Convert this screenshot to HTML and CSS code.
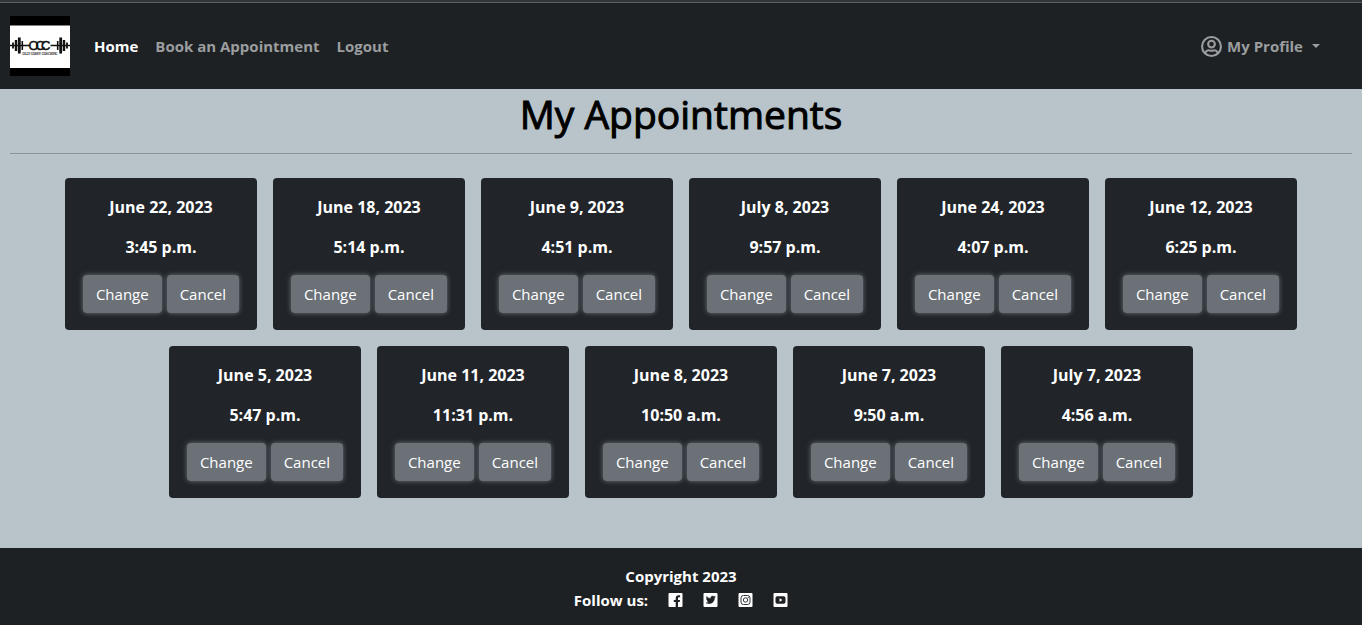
FILE: index.html
```html
<!DOCTYPE html>
<html lang="en">
<head>
<meta charset="utf-8">
<meta name="viewport" content="width=device-width, initial-scale=1">
<title>My Appointments</title>
<link rel="stylesheet" href="styles.css">
</head>
<body>
<header class="navbar">
  <a class="brand" href="#" aria-label="Olly Corey Coaching">
    <svg class="logo" viewBox="0 0 60 60" aria-hidden="true">
      <rect width="60" height="60" fill="#000"/>
      <rect y="9.500" width="60" height="42.500" fill="#fff"/>
      <path d="M0 29.500H20M40.500 29.500H60" stroke="#111" stroke-width="1.300"/>
      <path d="M3 26.500v6M57 26.500v6" stroke="#111" stroke-width="1.800"/>
      <path d="M6 24v11M54 24v11" stroke="#111" stroke-width="2.400"/>
      <path d="M9.300 21.500v16M50.700 21.500v16" stroke="#111" stroke-width="2.800"/>
      <path d="M12.300 25v9M47.700 25v9" stroke="#111" stroke-width="1.600"/>
      <text class="logo-mark" x="18.500 25.500 31" y="34">OCC</text>
      <text class="logo-name" x="30" y="39" text-anchor="middle">OLLY COREY COACHING</text>
    </svg>
  </a>
  <nav class="nav-links">
    <a class="nav-link active" href="#">Home</a>
    <a class="nav-link" href="#">Book an Appointment</a>
    <a class="nav-link" href="#">Logout</a>
  </nav>
  <button class="profile" type="button">
    <svg class="profile-icon" viewBox="0 0 20 20" aria-hidden="true" fill="none" stroke="currentColor" stroke-width="2">
      <circle cx="10" cy="10" r="9"/>
      <circle cx="10" cy="7.700" r="3.200"/>
      <path d="M3.800 16.200C5 14 6.600 13.300 8 13.700c1.400.4 2.600.4 4 0 1.400-.4 3 .3 4.200 2.500"/>
    </svg>
    <span>My Profile</span>
    <span class="caret"></span>
  </button>
</header>

<main class="content">
  <h1 class="title">My Appointments</h1>
  <hr class="rule">
  <div class="cards">
    <article class="card"><p>June 22, 2023</p><p>3:45 p.m.</p><div class="actions"><button class="btn" type="button">Change</button><button class="btn" type="button">Cancel</button></div></article>
    <article class="card"><p>June 18, 2023</p><p>5:14 p.m.</p><div class="actions"><button class="btn" type="button">Change</button><button class="btn" type="button">Cancel</button></div></article>
    <article class="card"><p>June 9, 2023</p><p>4:51 p.m.</p><div class="actions"><button class="btn" type="button">Change</button><button class="btn" type="button">Cancel</button></div></article>
    <article class="card"><p>July 8, 2023</p><p>9:57 p.m.</p><div class="actions"><button class="btn" type="button">Change</button><button class="btn" type="button">Cancel</button></div></article>
    <article class="card"><p>June 24, 2023</p><p>4:07 p.m.</p><div class="actions"><button class="btn" type="button">Change</button><button class="btn" type="button">Cancel</button></div></article>
    <article class="card"><p>June 12, 2023</p><p>6:25 p.m.</p><div class="actions"><button class="btn" type="button">Change</button><button class="btn" type="button">Cancel</button></div></article>
    <article class="card"><p>June 5, 2023</p><p>5:47 p.m.</p><div class="actions"><button class="btn" type="button">Change</button><button class="btn" type="button">Cancel</button></div></article>
    <article class="card"><p>June 11, 2023</p><p>11:31 p.m.</p><div class="actions"><button class="btn" type="button">Change</button><button class="btn" type="button">Cancel</button></div></article>
    <article class="card"><p>June 8, 2023</p><p>10:50 a.m.</p><div class="actions"><button class="btn" type="button">Change</button><button class="btn" type="button">Cancel</button></div></article>
    <article class="card"><p>June 7, 2023</p><p>9:50 a.m.</p><div class="actions"><button class="btn" type="button">Change</button><button class="btn" type="button">Cancel</button></div></article>
    <article class="card"><p>July 7, 2023</p><p>4:56 a.m.</p><div class="actions"><button class="btn" type="button">Change</button><button class="btn" type="button">Cancel</button></div></article>
  </div>
</main>

<footer class="footer">
  <div>Copyright 2023</div>
  <div class="social">
    <span>Follow us:</span>
    <a href="#" aria-label="Facebook"><svg viewBox="0 0 14 14"><rect width="14" height="14" rx="1" fill="#fff"/><path d="M7.200 14V9H5.300V6.900h1.900V5.300c0-2 1.100-3 2.900-3 .8 0 1.500.1 1.500.1v1.800h-.9c-.9 0-1.200.5-1.200 1.100v1.600h2L11.200 9H9.500v5z" fill="#1d2124"/></svg></a>
    <a href="#" aria-label="Twitter"><svg viewBox="0 0 14 14"><rect width="14" height="14" rx="1" fill="#fff"/><path d="M11 4.960v.24c0 2.540-1.930 5.460-5.460 5.460-1.090 0-2.100-.31-2.950-.86.970.11 2-.16 2.830-.8-.84-.02-1.550-.57-1.790-1.330.3.040.57.040.87-.03A1.920 1.920 0 0 1 2.960 5.740c.25.140.55.230.86.240A1.920 1.920 0 0 1 3.230 3.420a5.460 5.460 0 0 0 3.960 2.010c-.28-1.360.73-2.450 1.870-2.450.55 0 1.050.23 1.400.6.430-.08.850-.24 1.220-.46-.14.440-.44.820-.84 1.060.38-.04.760-.15 1.100-.3-.26.380-.58.720-.94 1.080z" fill="#1d2124" stroke="#1d2124" stroke-width=".4"/></svg></a>
    <a href="#" aria-label="Instagram"><svg viewBox="0 0 14 14"><rect width="14" height="14" rx="1" fill="#fff"/><g fill="none" stroke="#1d2124" stroke-width=".9"><rect x="2.500" y="2.500" width="9" height="9" rx="2.400"/><circle cx="7" cy="7" r="2.200"/></g><circle cx="9.700" cy="4.300" r=".6" fill="#1d2124"/></svg></a>
    <a href="#" aria-label="YouTube"><svg viewBox="0 0 14 14"><rect width="14" height="14" rx="1" fill="#fff"/><rect x="2" y="3.200" width="10" height="7.600" rx="1.800" fill="#1d2124"/><path d="M6 5.300v3.400L9 7z" fill="#fff"/></svg></a>
  </div>
</footer>
</body>
</html>
```
FILE: styles.css
```css
*, *::before { box-sizing: border-box; }

body {
  margin: 0;
  min-height: 100vh;
  display: flex;
  flex-direction: column;
  background: #b8c3ca;
  color: #000;
  font: 15px/24px "Open Sans", "Noto Sans", sans-serif;
}

body::before {
  content: "";
  height: 3px;
  border-bottom: 1px solid #5c5f62;
  background: #333639;
}

a { color: inherit; text-decoration: none; }
button { font: inherit; cursor: pointer; }

.navbar {
  display: flex;
  align-items: center;
  padding: 13px 42px 13px 10px;
  background: #1d2124;
  color: #9b9d9f;
  font-weight: 700;
}

.logo { display: block; width: 60px; height: 60px; }
.logo-mark { font: 13px "Liberation Sans", sans-serif; fill: #111; stroke: #111; stroke-width: 0.5px; }
.logo-name { font: 3px "Liberation Serif", serif; fill: #111; stroke: #111; stroke-width: 0.1px; }

.nav-links { display: flex; gap: 17px; margin-left: 24px; }
.nav-link.active { color: #fff; }

.profile {
  display: flex;
  align-items: center;
  gap: 5px;
  margin-left: auto;
  padding: 0;
  border: 0;
  background: none;
  color: #9b9d9f;
  font-weight: 700;
}

.profile-icon { width: 21px; height: 21px; }

.caret {
  margin-left: 4px;
  border: 4px solid transparent;
  border-top-color: currentColor;
  border-bottom: 0;
}

.content { flex: 1; padding: 1px 10px 50px; }

.title {
  margin: 0;
  font-size: 39px;
  font-weight: 500;
  line-height: 48px;
  text-align: center;
  -webkit-text-stroke: 1px #000;
}

.rule {
  height: 1px;
  margin: 15px 0 24px;
  border: 0;
  background: #89939a;
}

.cards { display: flex; flex-wrap: wrap; justify-content: center; gap: 16px; padding: 0 48px; }

.card {
  width: 192px;
  padding: 17px 16px;
  border-radius: 4px;
  background: #212529;
  color: #fff;
  text-align: center;
}

.card p { margin: 0 0 16px; font-size: 16px; font-weight: 700; }

.actions { display: flex; justify-content: center; gap: 5px; }

.btn {
  padding: 7px 13px;
  border: 0;
  border-radius: 4px;
  background: #6c7178;
  color: #fff;
  box-shadow: 0 0 5px #6c757d;
}

.footer {
  padding: 16px 10px 13px;
  background: #1d2124;
  color: #fff;
  font-weight: 700;
  text-align: center;
}

.social { display: flex; justify-content: center; align-items: center; gap: 20px; }
.social svg { display: block; width: 15px; height: 14px; }
```
